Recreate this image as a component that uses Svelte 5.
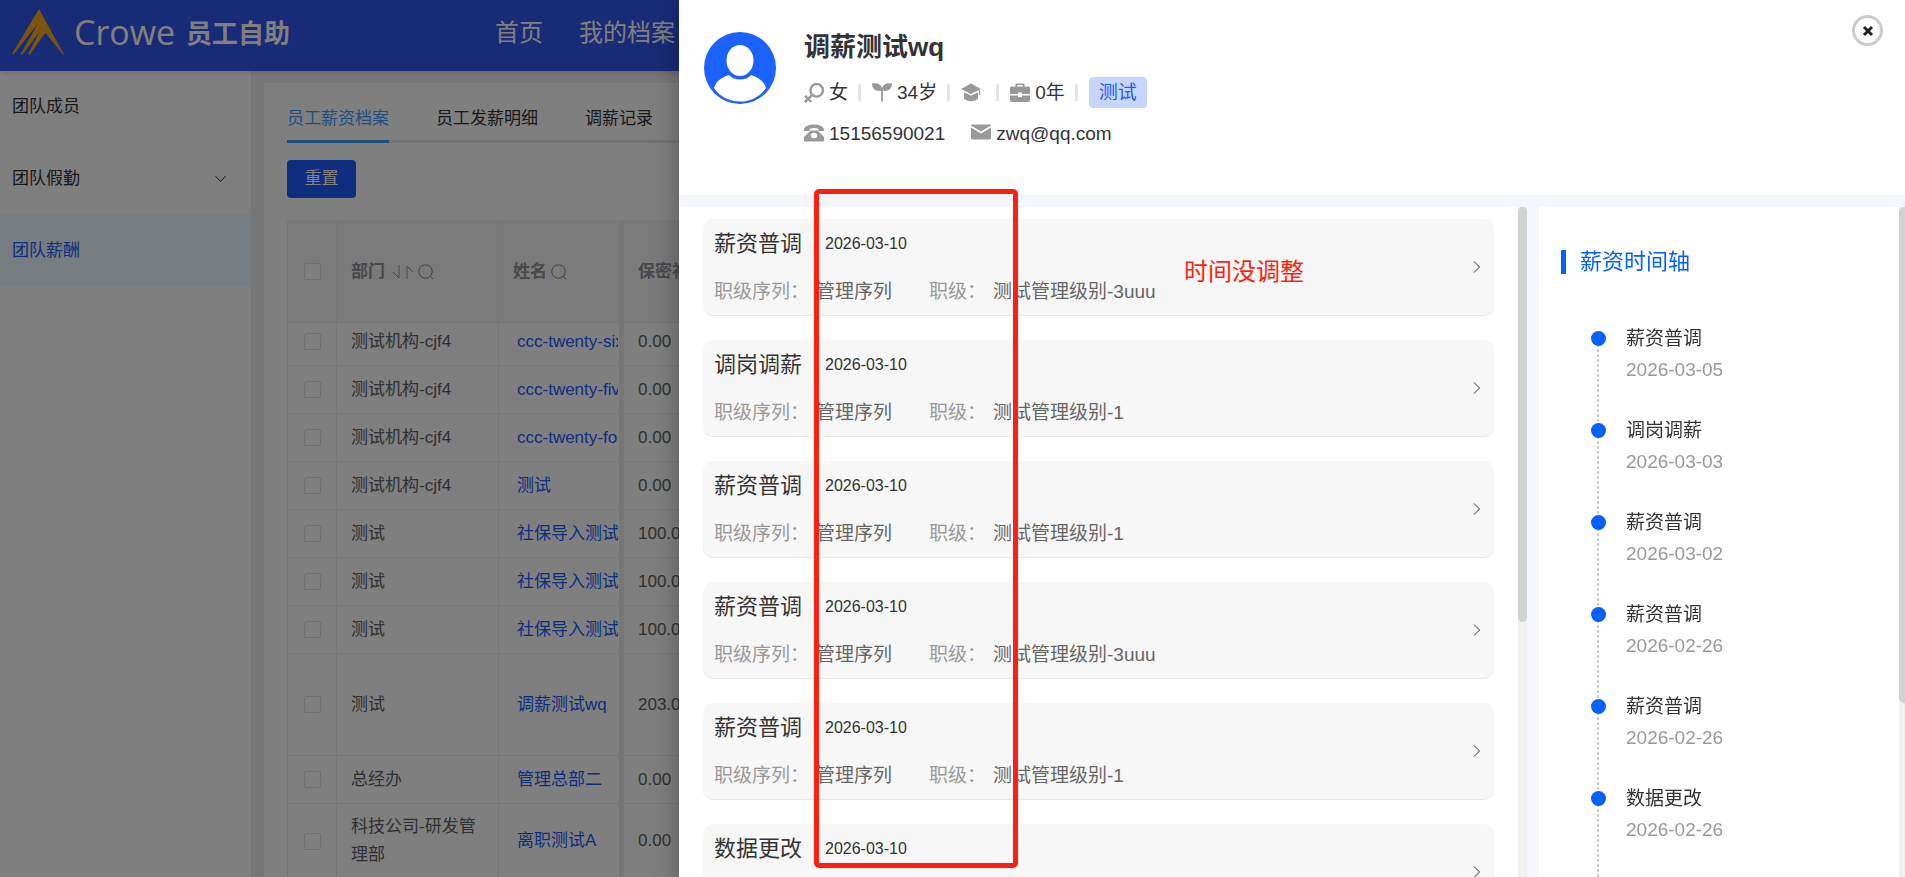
<script lang="ts">
    type Row = {
        dept: string;
        name: string;
        amount: string;
        tall?: boolean;
    };

    const tabs = ["员工薪资档案", "员工发薪明细", "调薪记录"];

    const menu = [
        { label: "团队成员" },
        { label: "团队假勤", expandable: true },
        { label: "团队薪酬", active: true },
    ];

    const rows: Row[] = [
        { dept: "测试机构-cjf4", name: "ccc-twenty-six", amount: "0.00" },
        { dept: "测试机构-cjf4", name: "ccc-twenty-five", amount: "0.00" },
        { dept: "测试机构-cjf4", name: "ccc-twenty-four", amount: "0.00" },
        { dept: "测试机构-cjf4", name: "测试", amount: "0.00" },
        { dept: "测试", name: "社保导入测试", amount: "100.00" },
        { dept: "测试", name: "社保导入测试", amount: "100.00" },
        { dept: "测试", name: "社保导入测试.", amount: "100.00" },
        { dept: "测试", name: "调薪测试wq", amount: "203.00", tall: true },
        { dept: "总经办", name: "管理总部二", amount: "0.00" },
        { dept: "科技公司-研发管理部", name: "离职测试A", amount: "0.00" },
    ];

    const records = [
        { type: "薪资普调", date: "2026-03-10", series: "管理序列", grade: "测试管理级别-3uuu" },
        { type: "调岗调薪", date: "2026-03-10", series: "管理序列", grade: "测试管理级别-1" },
        { type: "薪资普调", date: "2026-03-10", series: "管理序列", grade: "测试管理级别-1" },
        { type: "薪资普调", date: "2026-03-10", series: "管理序列", grade: "测试管理级别-3uuu" },
        { type: "薪资普调", date: "2026-03-10", series: "管理序列", grade: "测试管理级别-1" },
        { type: "数据更改", date: "2026-03-10", series: "管理序列", grade: "测试管理级别-1" },
    ];

    const timeline = [
        { type: "薪资普调", date: "2026-03-05" },
        { type: "调岗调薪", date: "2026-03-03" },
        { type: "薪资普调", date: "2026-03-02" },
        { type: "薪资普调", date: "2026-02-26" },
        { type: "薪资普调", date: "2026-02-26" },
        { type: "数据更改", date: "2026-02-26" },
        { type: "薪资普调", date: "2026-02-26" },
    ];
</script>

{#snippet search()}
    <svg class="search" viewBox="0 0 16 16" aria-hidden="true">
        <circle cx="7.5" cy="7.5" r="6.7" />
        <path d="M12 12.2 15 15" />
    </svg>
{/snippet}

<div class="page">
    <header class="topbar">
        <svg class="mark" viewBox="0 0 52 46" aria-hidden="true">
            <path d="M27 0 52 45.500 50.500 45 33.500 24 30.500 27.500 18 45.500 16 45 28 22 10.500 45.500 8.500 45 26 14.500 1.500 45.500 0 45Z" />
        </svg>
        <span class="brand">Crowe</span>
        <span class="product">员工自助</span>
        <nav class="topnav">
            <a href="#home">首页</a>
            <a href="#profile">我的档案</a>
        </nav>
    </header>

    <div class="body">
        <aside class="sidebar">
            {#each menu as item}
                <a href="#menu" class:active={item.active}>
                    {item.label}
                    {#if item.expandable}
                        <svg viewBox="0 0 12 8" aria-hidden="true"><path d="M1 1 6 6.5 11 1" /></svg>
                    {/if}
                </a>
            {/each}
        </aside>

        <main class="content">
            <div class="tabs" role="tablist">
                {#each tabs as tab, i}
                    <button role="tab" aria-selected={i === 0} class:current={i === 0}>{tab}</button>
                {/each}
            </div>
            <button class="reset">重置</button>

            <table>
                <colgroup>
                    <col class="c-check" />
                    <col class="c-dept" />
                    <col class="c-name" />
                    <col />
                </colgroup>
                <thead>
                    <tr>
                        <th class="check"><input type="checkbox" aria-label="全选" /></th>
                        <th>
                            <span class="th">
                                部门
                                <svg class="sort" viewBox="0 0 22 16" aria-hidden="true">
                                    <path d="M7 1V14L1 8M15 15V2L21 8" />
                                </svg>
                                {@render search()}
                            </span>
                        </th>
                        <th class="name"><span class="th">姓名 {@render search()}</span></th>
                        <th>保密补贴</th>
                    </tr>
                </thead>
                <tbody>
                    {#each rows as row}
                        <tr class:tall={row.tall}>
                            <td class="check"><input type="checkbox" aria-label={row.name} /></td>
                            <td>{row.dept}</td>
                            <td class="name"><a href="#employee">{row.name}</a></td>
                            <td>{row.amount}</td>
                        </tr>
                    {/each}
                </tbody>
            </table>
        </main>
    </div>
</div>

<div class="mask"></div>

<section class="drawer" aria-label="员工薪资档案">
    <header class="profile">
        <svg class="avatar" viewBox="0 0 72 72" aria-hidden="true">
            <circle cx="36" cy="36" r="36" fill="#1c62ff" />
            <path
                d="M25 43C30 49 42 49 47 43C54 45 60 49 62 56C56 65 46 69.500 36 69.500S16 65 10 56C12 49 18 45 25 43Z"
                fill="#fff"
            />
            <ellipse cx="36" cy="29" rx="16" ry="18" fill="#1c62ff" />
            <ellipse cx="36" cy="28.500" rx="13.500" ry="15.500" fill="#fff" />
        </svg>

        <div class="info">
            <h1>调薪测试wq</h1>
            <div class="facts">
                <span class="fact">
                    <svg viewBox="0 0 20 20" aria-hidden="true">
                        <g fill="none" stroke="#999" stroke-width="2.4">
                            <circle cx="12.700" cy="7.300" r="6.300" />
                            <path d="M8.200 11.800 .7 19.300M1 12.800 7.200 19" />
                        </g>
                    </svg>
                    女
                </span>
                <i></i>
                <span class="fact">
                    <svg viewBox="0 0 20 20" aria-hidden="true">
                        <path d="M0 .5C5 -.3 9 1.500 10 5C11 1.500 15 -.3 20 .5C20 6 16.500 8.500 10.900 7.800V18.500H9.100V7.800C3.500 8.500 0 6 0 .5Z" />
                    </svg>
                    34岁
                </span>
                <i></i>
                <span class="fact">
                    <svg viewBox="0 0 20 20" aria-hidden="true">
                        <path d="M10 .5 0 6 10 11 20 6Z" />
                        <path d="M3 9.300 10 12.800 17 9.300V15.500C14 19 6 19 3 15.500Z" />
                        <path d="M18 7H19.200V12H18Z" />
                    </svg>
                </span>
                <i></i>
                <span class="fact">
                    <svg viewBox="0 0 20 20" aria-hidden="true">
                        <path d="M5.500 3.500V1Q5.500 .5 6 .5H14Q14.500 .5 14.500 1V3.500H18.500Q20 3.500 20 5V11H12V9.500H8V11H0V5Q0 3.500 1.500 3.500ZM7.200 3.500H12.800V2H7.200Z" fill-rule="evenodd" />
                        <path d="M0 12.500H8V14H12V12.500H20V17.500Q20 19 18.500 19H1.500Q0 19 0 17.500Z" />
                    </svg>
                    0年
                </span>
                <i></i>
                <span class="tag">测试</span>
            </div>
            <div class="facts contact">
                <span class="fact">
                    <svg viewBox="0 0 20 20" aria-hidden="true">
                        <path d="M0 6.500C1 -.2 19 -.2 20 6.500V8H14.500V6C12 4.800 8 4.800 5.500 6V8H0Z" />
                        <path d="M6.500 7.500H13.500L20 14V17.500Q20 18.500 19 18.500H1Q0 18.500 0 17.500V14ZM10 9.700A3.300 2.800 0 1 0 10 15.300A3.300 2.800 0 1 0 10 9.700Z" fill-rule="evenodd" />
                    </svg>
                    15156590021
                </span>
                <span class="fact">
                    <svg viewBox="0 0 20 20" aria-hidden="true">
                        <path d="M0 2.500Q0 1.500 1 1.500H19Q20 1.500 20 2.500L10 8.500Z" />
                        <path d="M0 4.500 10 10.500 20 4.500V15Q20 16.500 18.500 16.500H1.500Q0 16.500 0 15Z" />
                    </svg>
                    zwq@qq.com
                </span>
            </div>
        </div>

        <button class="close" aria-label="关闭">
            <svg viewBox="0 0 12 12" aria-hidden="true"><path d="M2 2 10 10M10 2 2 10" /></svg>
        </button>
    </header>

    <div class="panes">
        <div class="pane records">
            <ul>
                {#each records as record}
                    <li>
                        <div class="text">
                            <div class="head">
                                <h2>{record.type}</h2>
                                <time>{record.date}</time>
                            </div>
                            <dl>
                                <dt>职级序列：</dt>
                                <dd>{record.series}</dd>
                                <dt>职级：</dt>
                                <dd>{record.grade}</dd>
                            </dl>
                        </div>
                        <svg viewBox="0 0 8 14" aria-hidden="true"><path d="M1 1.500 6.500 7 1 12.500" /></svg>
                    </li>
                {/each}
            </ul>
            <div class="track"><div class="thumb"></div></div>
        </div>

        <div class="pane history">
            <div class="history-body">
                <h2>薪资时间轴</h2>
                <ol>
                    {#each timeline as step}
                        <li>
                            <span class="dot"></span>
                            <strong>{step.type}</strong>
                            <time>{step.date}</time>
                        </li>
                    {/each}
                </ol>
            </div>
            <div class="track"><div class="thumb"></div></div>
        </div>
    </div>

    <div class="marker"></div>
    <p class="remark">时间没调整</p>
</section>

<style>
    :global(body) {
        overflow: hidden;
        font-family: "Liberation Sans", "Noto Sans CJK SC", sans-serif;
        color: #333;
    }

    * {
        box-sizing: border-box;
    }

    a {
        color: inherit;
        text-decoration: none;
    }

    button {
        border: 0;
        padding: 0;
        background: none;
        font: inherit;
        color: inherit;
    }

    h1, h2, p, ul, ol, dl, dd {
        margin: 0;
        padding: 0;
    }

    ul, ol {
        list-style: none;
    }

    .page {
        display: flex;
        flex-direction: column;
        height: 100vh;
        overflow: hidden;
        font-size: 17px;
        background: #eee;
    }

    /* top bar */
    .topbar {
        position: relative;
        display: flex;
        align-items: center;
        flex: none;
        height: 71px;
        padding: 0 12px 8px;
        background: #3056ee;
        color: #fff;
        box-shadow: 0 2px 6px rgba(0, 0, 0, 0.15);
    }

    .mark {
        width: 52px;
        height: 46px;
        fill: #f7a81b;
    }

    .brand {
        width: 122px;
        padding-left: 10px;
        font-family: "Open Sans", sans-serif;
        font-size: 34px;
        font-weight: 400;
    }

    .product {
        width: 309px;
        font-size: 26px;
        font-weight: bold;
    }

    .topnav {
        display: flex;
        gap: 36px;
        padding-bottom: 2px;
        font-size: 24px;
        white-space: nowrap;
    }

    .body {
        display: flex;
        flex: 1;
        min-height: 0;
    }

    .sidebar {
        flex: none;
        width: 251px;
        background: #fff;
    }

    .sidebar a {
        display: flex;
        align-items: center;
        justify-content: space-between;
        height: 72px;
        padding: 0 24px 5px 12px;
    }

    .sidebar a.active {
        background: #edf8ff;
        color: #1c5aff;
    }

    .sidebar svg {
        width: 13px;
        height: 8px;
        margin-top: 4px;
        fill: none;
        stroke: #333;
    }

    .content {
        flex: 1;
        min-width: 0;
        margin: 12px 0 0 13px;
        padding: 12px 23px;
        background: #fff;
        overflow: hidden;
    }

    .tabs {
        display: flex;
        gap: 47px;
        height: 48px;
        box-shadow: inset 0 -3px #e4e7ed;
    }

    .tabs button {
        padding-bottom: 3px;
        border-bottom: 3px solid transparent;
    }

    .tabs .current {
        color: #409eff;
        border-color: #409eff;
    }

    .reset {
        display: block;
        width: 69px;
        height: 38px;
        margin: 17px 0 22px;
        padding-bottom: 5px;
        border-radius: 4px;
        background: #1c5aff;
        color: #fff;
    }

    table {
        width: 100%;
        table-layout: fixed;
        border-collapse: separate;
        border-spacing: 0;
        border: solid #ebeef5;
        border-width: 1px 0 0 1px;
        line-height: 28px;
    }

    .c-check {
        width: 49px;
    }

    .c-dept {
        width: 162px;
    }

    .c-name {
        width: 125px;
    }

    th, td {
        height: 48px;
        padding: 0 14px;
        border: solid #ebeef5;
        border-width: 0 1px 1px 0;
        text-align: left;
        color: #606266;
    }

    th {
        height: 102px;
        background: #f5f5f5;
        color: #909399;
    }

    tbody tr:first-child td {
        height: 43px;
        padding-bottom: 5px;
    }

    .tall td {
        height: 102px;
    }

    tbody tr:last-child td {
        height: 75px;
    }

    .check {
        padding: 0 0 0 16px;
        line-height: 0;
    }

    .name {
        padding-right: 5px;
        background-image: linear-gradient(#ececef, #ececef);
        background-position: right;
        background-size: 4px 100%;
        background-repeat: no-repeat;
    }

    .name a {
        display: block;
        padding-left: 4px;
        overflow: hidden;
        white-space: nowrap;
        color: #1c5aff;
    }

    .th {
        display: flex;
        align-items: center;
        gap: 4px;
    }

    .search {
        width: 16px;
        height: 16px;
        fill: none;
        stroke: #808388;
    }

    .sort {
        width: 22px;
        height: 16px;
        margin-left: 3px;
        fill: none;
        stroke: #909399;
    }

    input {
        appearance: none;
        width: 17px;
        height: 17px;
        margin: 0;
        border: 1px solid #dcdfe6;
        border-radius: 2px;
        background: #fff;
    }

    .mask {
        position: fixed;
        inset: 0;
        background: rgba(0, 0, 0, 0.5);
    }

    /* drawer */
    .drawer {
        position: fixed;
        inset: 0 0 0 679px;
        display: flex;
        flex-direction: column;
        background: #f4f6fc;
        font-size: 19px;
        box-shadow: 0 8px 10px -5px rgba(0, 0, 0, 0.2), 0 16px 24px 2px rgba(0, 0, 0, 0.14), 0 6px 30px 5px rgba(0, 0, 0, 0.12);
    }

    .profile {
        display: flex;
        align-items: flex-start;
        gap: 28px;
        flex: none;
        height: 195px;
        padding: 0 22px 0 25px;
        background: #fff;
    }

    .avatar {
        width: 72px;
        height: 72px;
        margin-top: 32px;
    }

    .info {
        flex: 1;
        padding-top: 27px;
    }

    h1 {
        font-size: 26px;
        line-height: 40px;
    }

    .facts {
        display: flex;
        align-items: center;
        gap: 10px;
        height: 51px;
        line-height: 31px;
    }

    .facts.contact {
        gap: 26px;
        height: 30px;
    }

    .facts i {
        width: 3px;
        height: 17px;
        margin-right: 1px;
        background: #e4e4e4;
    }

    .fact {
        display: flex;
        align-items: center;
    }

    .fact svg {
        width: 20px;
        height: 20px;
        margin-right: 5px;
        fill: #999;
    }

    .tag {
        padding: 0 10px;
        border-radius: 4px;
        background: #c6d6ff;
        color: #1c5aff;
    }

    .close {
        display: grid;
        place-items: center;
        width: 31px;
        height: 31px;
        margin-top: 15px;
        border: 3px solid #ccc;
        border-radius: 50%;
    }

    .close svg {
        width: 12px;
        height: 12px;
        stroke: #222;
        stroke-width: 3;
    }

    .panes {
        display: flex;
        gap: 12px;
        flex: 1;
        min-height: 0;
        padding-top: 12px;
    }

    .pane {
        display: flex;
        background: #fff;
        overflow: hidden;
    }

    .track {
        flex: none;
        width: 9px;
        background: #f1f1f1;
    }

    .thumb {
        height: 62%;
        border-radius: 5px;
        background: #d0d2d4;
    }

    .records {
        flex: 1;
    }

    .records ul {
        display: flex;
        flex-direction: column;
        gap: 24px;
        flex: 1;
        padding: 12px 24px;
    }

    .records li {
        display: flex;
        align-items: center;
        justify-content: space-between;
        flex: none;
        height: 97px;
        padding: 0 13px 0 11px;
        border-bottom: 1px solid #e8e8e8;
        border-radius: 10px;
        background: #f7f7f7;
    }

    .records svg {
        width: 8px;
        height: 14px;
        fill: none;
        stroke: #333;
        stroke-width: 1;
    }

    .head {
        display: flex;
        align-items: center;
        gap: 23px;
        height: 48px;
    }

    .head h2 {
        padding-bottom: 4px;
        font-size: 22px;
        font-weight: normal;
    }

    .head time {
        padding-top: 1px;
        font-size: 16px;
    }

    dl {
        display: flex;
        height: 48px;
        line-height: 50px;
    }

    dt {
        padding-right: 7px;
        color: #999;
    }

    dd {
        padding-right: 37px;
        color: #666;
    }

    .history {
        flex: none;
        width: 366px;
    }

    .history-body {
        flex: 1;
        padding: 43px 22px 0;
    }

    .history .track {
        width: 6px;
    }

    .history .thumb {
        height: 74%;
        border-radius: 5px 0 0 5px;
    }

    .history h2 {
        padding-left: 14px;
        border-left: 5px solid #0560ff;
        font-size: 22px;
        font-weight: normal;
        line-height: 24px;
        color: #0560ff;
    }

    ol {
        padding: 49px 0 0 36px;
    }

    ol li {
        position: relative;
        height: 92px;
        padding-left: 29px;
        line-height: 31px;
    }

    ol li::before {
        content: "";
        position: absolute;
        top: 16px;
        left: 0;
        width: 2px;
        height: 92px;
        background: repeating-linear-gradient(#ccc 0 3px, #fff 3px 5px);
    }

    ol strong, ol time {
        display: block;
        font-weight: normal;
    }

    ol time {
        color: #999;
    }

    .dot {
        position: absolute;
        top: 8px;
        left: -6px;
        z-index: 1;
        width: 15px;
        height: 15px;
        border-radius: 50%;
        background: #0560ff;
    }

    /* review mark-up over the drawer */
    .marker {
        position: absolute;
        top: 189px;
        left: 135px;
        width: 204px;
        height: 679px;
        border: 5px solid #ff1f10;
        border-radius: 5px;
    }

    .remark {
        position: absolute;
        top: 254px;
        left: 505px;
        font-size: 24px;
        line-height: 36px;
        color: #ff1f10;
    }
</style>
